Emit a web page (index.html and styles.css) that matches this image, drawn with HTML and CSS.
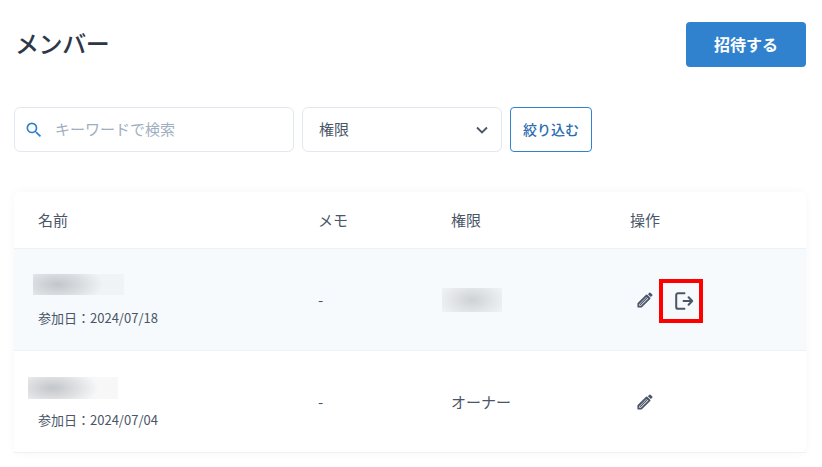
FILE: index.html
```html
<!DOCTYPE html>
<html lang="ja">
<head>
<meta charset="utf-8">
<title>メンバー</title>
<link rel="stylesheet" href="styles.css">
</head>
<body>
<div class="page">
  <header class="head">
    <h1 class="title">メンバー</h1>
    <button class="invite">招待する</button>
  </header>
  <div class="filters">
    <div class="search">
      <svg class="search-icon" width="20" height="20" viewBox="0 0 24 24"><path fill="#3182ce" d="M15.500 14h-.79l-.28-.27A6.470 6.470 0 0 0 16 9.500 6.500 6.500 0 1 0 9.500 16c1.610 0 3.090-.59 4.230-1.570l.27.28v.79l5 4.990L20.490 19l-4.990-5zm-6 0C7.010 14 5 11.990 5 9.500S7.010 5 9.500 5 14 7.010 14 9.500 11.990 14 9.500 14z"/></svg>
      <span class="placeholder">キーワードで検索</span>
    </div>
    <div class="select">
      <span>権限</span>
      <svg class="chevron" width="16" height="16" viewBox="0 0 16 16"><path fill="none" stroke="#4a5568" stroke-width="1.800" d="M3 5.500 8 10.500 13 5.500"/></svg>
    </div>
    <button class="narrow">絞り込む</button>
  </div>
  <section class="card">
    <div class="row row-head">
      <div>名前</div><div>メモ</div><div>権限</div><div>操作</div>
    </div>
    <div class="row row-a">
      <div class="name">
        <div class="blur blur-name"></div>
        <div class="joined">参加日：2024/07/18</div>
      </div>
      <div>-</div>
      <div><div class="blur blur-role"></div></div>
      <div class="ops">
        <svg class="pencil" width="20" height="20" viewBox="0 0 24 24"><path fill="none" stroke="#4a5568" stroke-width="2.200" stroke-linejoin="round" d="M4 16.500V20h3.500L17.500 10 14 6.500z"/><path fill="#4a5568" d="M15.500 5l3.500 3.500 1.700-1.700a1 1 0 0 0 0-1.400l-2.100-2.100a1 1 0 0 0-1.400 0z"/><path stroke="#4a5568" stroke-width="1.500" d="M6 17.800 15.500 8.300"/></svg>
        <span class="leave">
          <svg class="leave-icon" width="22" height="22" viewBox="0 0 24 24"><path fill="none" stroke="#4a5568" stroke-width="2.200" stroke-linecap="round" stroke-linejoin="round" d="M12.500 3.500H5.500a2 2 0 0 0-2 2v13a2 2 0 0 0 2 2h7M11.500 12H21M17 8l4 4-4 4"/></svg>
        </span>
      </div>
    </div>
    <div class="row row-b">
      <div class="name">
        <div class="blur blur-name2"></div>
        <div class="joined">参加日：2024/07/04</div>
      </div>
      <div>-</div>
      <div>オーナー</div>
      <div class="ops">
        <svg class="pencil" width="20" height="20" viewBox="0 0 24 24"><path fill="none" stroke="#4a5568" stroke-width="2.200" stroke-linejoin="round" d="M4 16.500V20h3.500L17.500 10 14 6.500z"/><path fill="#4a5568" d="M15.500 5l3.500 3.500 1.700-1.700a1 1 0 0 0 0-1.400l-2.100-2.100a1 1 0 0 0-1.400 0z"/><path stroke="#4a5568" stroke-width="1.500" d="M6 17.800 15.500 8.300"/></svg>
      </div>
    </div>
  </section>
</div>
</body>
</html>
```
FILE: styles.css
```css
* { box-sizing: border-box; }
html, body { margin: 0; background: #fff; }
body { font-family: "Noto Sans CJK JP", "Noto Sans", sans-serif; color: #4a5568; overflow: hidden; }
.page { width: 822px; height: 467px; padding: 22px 16px 0 14px; }
.head { display: flex; justify-content: space-between; align-items: center; height: 45px; }
.title { margin: 0; font-size: 24px; font-weight: 500; line-height: 42px; padding: 0 0 3px 1px; letter-spacing: -.4px; color: #2d3748; }
.invite { width: 120px; height: 45px; border: 0; border-radius: 4px; background: #3182ce; color: #fff; font: 700 16px "Noto Sans CJK JP", sans-serif; padding: 0 0 2px; }
.filters { display: flex; gap: 8px; margin-top: 40px; height: 45px; }
.search, .select { display: flex; align-items: center; height: 45px; border: 1px solid #e2e8f0; border-radius: 6px; background: #fff; }
.search { width: 280px; padding-left: 9px; gap: 11px; }
.placeholder { font-size: 15px; color: #a0aec0; padding-bottom: 2px; }
.select { width: 200px; padding: 0 11px 0 16px; justify-content: space-between; font-size: 15px; }
.select span { padding-bottom: 2px; }
.narrow { width: 82px; height: 45px; border: 1px solid #3182ce; border-radius: 4px; background: #fff; color: #2b6cb0; font: 500 14px "Noto Sans CJK JP", sans-serif; padding: 0 0 2px; }
.card { margin-top: 40px; background: #fff; border-radius: 6px; box-shadow: 0 0 10px rgba(0,0,0,.04); }
.row { display: grid; grid-template-columns: 280px 133px 179px 200px; align-items: center; font-size: 15px; border-bottom: 1px solid #edf2f7; }
.row > div { padding-left: 24px; }
.row-head { height: 57px; padding-bottom: 2px; }
.row-a { height: 102px; background: #f7fafc; }
.row-b { height: 102px; }
.name { padding-top: 3px; }
.blur { height: 21px; background: radial-gradient(ellipse 46px 20px at 27% 50%, #c3c6ca, rgba(200,203,207,.6) 55%, rgba(215,217,220,.2)); }
.blur-name { width: 91px; margin-left: -5px; }
.blur-name2 { width: 90px; height: 22px; margin: 1px 0 -2px -10px; }
.blur-role { width: 60px; height: 24px; margin-left: -9px; background: radial-gradient(ellipse 34px 20px at 50% 50%, #cfd2d5, rgba(210,212,215,.55) 60%, rgba(220,222,225,.3)); }
.joined { margin-top: 13px; font-size: 13px; line-height: 20px; }
.ops { display: flex; align-items: center; gap: 4px; }
.pencil { margin-left: 5px; }
.leave { display: flex; align-items: center; justify-content: center; width: 44px; height: 44px; margin-top: 3px; border: 4px solid #f00; }
.leave-icon { margin-left: 6px; }
```
